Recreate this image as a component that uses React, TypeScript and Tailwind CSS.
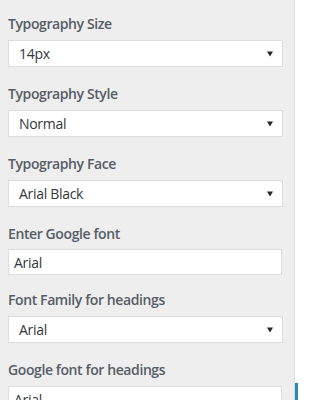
import React from "react";

const Arrow = () => (
  <svg width="8" height="6" viewBox="0 0 8 6" className="shrink-0">
    <path d="M1 0.5 L7 0.5 L4 5.5 Z" fill="#23282d" />
  </svg>
);

const Label = ({ children }: { children: React.ReactNode }) => (
  <div className="h-[24px] text-[14px] font-semibold leading-[24px] tracking-[-0.4px] text-[#555d66]">{children}</div>
);

const Select = ({ value, mt = "mt-[4px]" }: { value: string; mt?: string }) => (
  <div className={`${mt} flex h-[27px] w-[275px] shrink-0 items-center justify-between border border-[#dddddd] bg-white pl-[10px] pr-[8px] text-[14px] tracking-[-0.3px] text-[#32373c]`}>
    <span>{value}</span>
    <Arrow />
  </div>
);

const Input = ({ value }: { value: string }) => (
  <div className="mt-[3px] flex h-[26px] w-[274px] shrink-0 items-center border border-[#dddddd] bg-white pl-[5px] text-[14px] tracking-[-0.3px] text-[#32373c]">
    <span>{value}</span>
  </div>
);

export default function App() {
  return (
    <div className="flex h-[400px] w-[309px] overflow-hidden bg-white" style={{ fontFamily: '"Open Sans", "Noto Sans", sans-serif' }}>
      <div className="flex w-[294px] shrink-0 flex-col bg-[#eeeeee] pl-[8px] pt-[12px]">
        <div className="flex flex-col">
          <Label>Typography Size</Label>
          <Select value="14px" />
        </div>
        <div className="mt-[15px] flex flex-col">
          <Label>Typography Style</Label>
          <Select value="Normal" />
        </div>
        <div className="mt-[15px] flex flex-col">
          <Label>Typography Face</Label>
          <Select value="Arial Black" />
        </div>
        <div className="mt-[15px] flex flex-col">
          <Label>Enter Google font</Label>
          <Input value="Arial" />
        </div>
        <div className="mt-[13px] flex flex-col">
          <Label>Font Family for headings</Label>
          <Select value="Arial" />
        </div>
        <div className="mt-[15px] flex flex-col">
          <Label>Google font for headings</Label>
          <div className="mt-[1px]">
            <Input value="Arial" />
          </div>
        </div>
      </div>
      <div className="w-[1px] shrink-0 bg-[#dddddd]" />
      <div className="flex flex-col justify-end">
        <div className="h-[17px] w-[3px] bg-[#2e8bab]" />
      </div>
    </div>
  );
}
